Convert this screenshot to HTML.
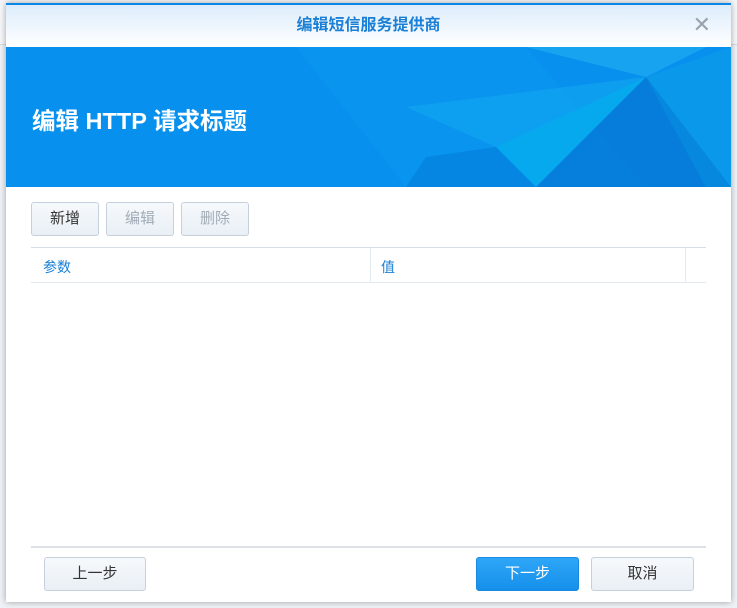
<!DOCTYPE html>
<html><head><meta charset="utf-8"><style>
*{margin:0;padding:0;box-sizing:border-box}
body{width:737px;height:608px;background:#eef1f5;position:relative;overflow:hidden;font-family:"Liberation Sans","Noto Sans CJK SC",sans-serif;font-size:14px}
.bgtop{position:absolute;left:0;top:0;width:737px;height:45px;background:#f4f6f9;border-bottom:1px solid #d6dbe2}
.dlg{position:absolute;left:6px;top:3px;width:725px;height:599px;background:#fff;border-top:2px solid #0a86e6;box-shadow:0 0 6px rgba(0,0,0,.35)}
.hd{height:42px;background:linear-gradient(#dcecfb,#fff);text-align:center;line-height:42px;color:#1a7fd6;font-size:16px;font-weight:bold}
.x{position:absolute;right:20px;top:9px;color:#9aa4ae;font-size:22px;line-height:22px}
.ban{position:relative;height:140px;background:#0890ee;overflow:hidden}
.ban h1{position:absolute;left:26px;top:55px;color:#fff;font-size:23.5px;font-weight:bold}
.btn{position:absolute;height:34px;border:1px solid #c6d0dc;border-radius:3px;background:linear-gradient(#f6f9fc,#e9eff5);text-align:center;line-height:32px;color:#333;font-size:15px}
.dis{color:#a3acb6}
.tbl{position:absolute;left:25px;top:242px;width:675px;height:36px;border-top:1px solid #d5dee8;border-bottom:1px solid #e3e9ef}
.tbl span{position:absolute;top:9px;color:#1a7fd6;font-size:14px}
.sep{position:absolute;top:0;width:1px;height:34px;background:#e3e9ef}
.foot{position:absolute;left:25px;top:541px;width:675px;height:2px;background:#dde1e5}
</style></head><body>
<div class="bgtop"></div>
<div class="dlg">
<div class="hd">编辑短信服务提供商</div>
<div class="x">✕</div>
<div class="ban">
<svg width="725" height="140" style="position:absolute;left:0;top:0">
<polygon points="290,0 520,0 640,140 400,140" fill="#0a97f0" opacity=".5"/>
<polygon points="520,0 700,0 640,30" fill="#22b0f0" opacity=".6"/>
<polygon points="640,30 725,0 725,140" fill="#0a9ae8" opacity=".8"/>
<polygon points="400,60 640,30 490,100" fill="#12aaf0" opacity=".55"/>
<polygon points="640,30 490,100 530,140" fill="#06b2ee" opacity=".7"/>
<polygon points="640,30 700,140 530,140" fill="#0678d6" opacity=".8"/>
<polygon points="640,30 725,140 700,140" fill="#0588de"/>
<polygon points="420,110 490,100 530,140 400,140" fill="#0680de" opacity=".7"/>
</svg>
<h1>编辑 HTTP 请求标题</h1>
</div>
<div class="btn" style="left:25px;top:197px;width:68px">新增</div>
<div class="btn dis" style="left:100px;top:197px;width:68px">编辑</div>
<div class="btn dis" style="left:175px;top:197px;width:68px">删除</div>
<div class="tbl"><span style="left:12px">参数</span><div class="sep" style="left:339px"></div><span style="left:350px">值</span><div class="sep" style="left:654px"></div></div>
<div class="foot"></div>
<div class="btn" style="left:38px;top:552px;width:102px">上一步</div>
<div class="btn" style="left:470px;top:552px;width:103px;background:linear-gradient(#2ea6f8,#1590ea);border-color:#1a8ae0;color:#fff">下一步</div>
<div class="btn" style="left:585px;top:552px;width:103px">取消</div>
</div>
</body></html>
